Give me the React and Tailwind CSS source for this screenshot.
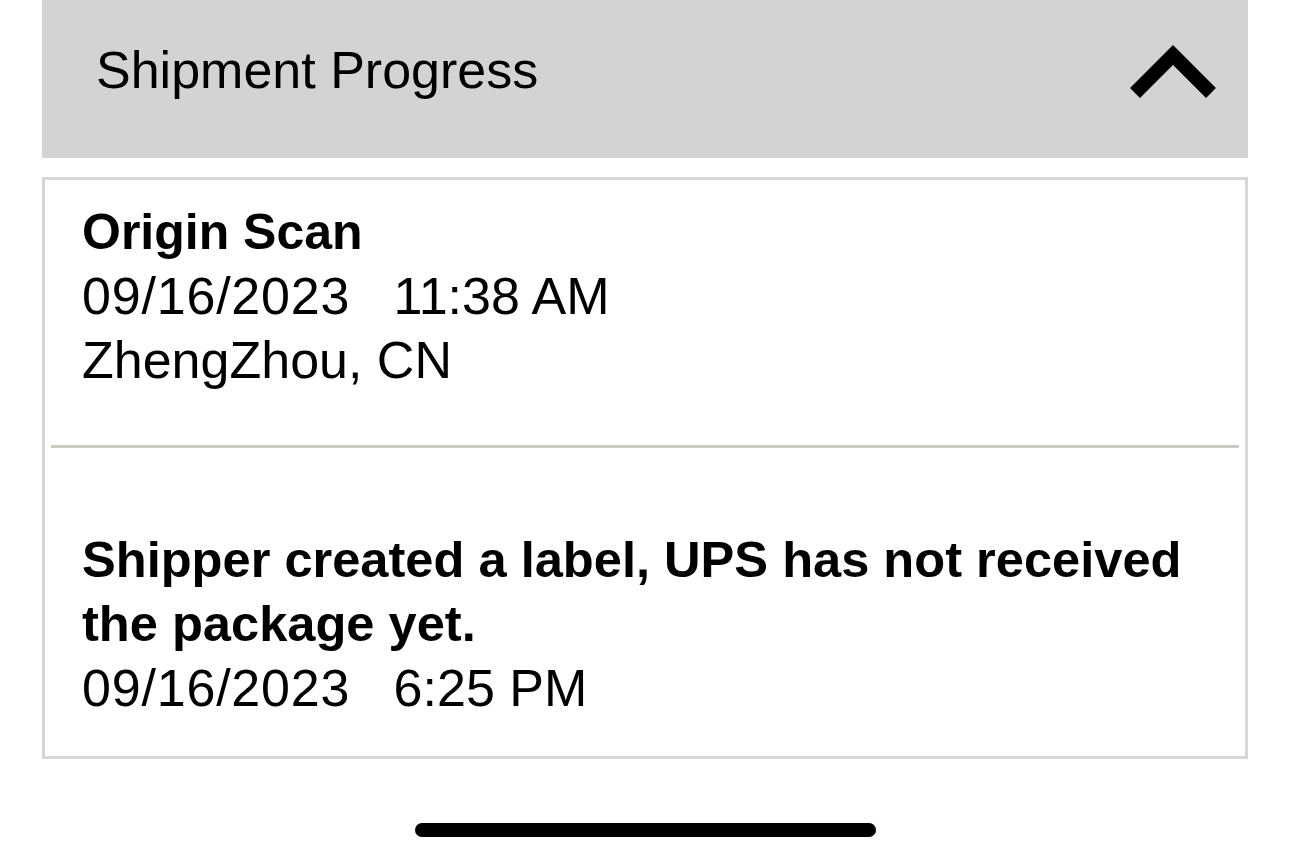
export default function App() {
  const font = { fontFamily: '"Liberation Sans", Arial, sans-serif' };
  return (
    <div className="min-h-[861px] w-full bg-white text-black" style={font}>
      <div className="mx-[42px] flex flex-col">
        <div className="flex h-[158px] items-start justify-between bg-[#d3d3d3] pl-[54px] pr-[27px]">
          <div className="mt-[41px] text-[52px] leading-[58px] font-normal">Shipment Progress</div>
          <svg className="mt-[40px]" width="96" height="64" viewBox="0 0 96 64" fill="none">
            <polyline points="10,53 48,15 86,53" stroke="#000" strokeWidth="14" strokeLinecap="butt" strokeLinejoin="miter" />
          </svg>
        </div>
        <div className="mt-[19px] flex flex-col border-[3px] border-[#d6d6d6] px-[6px] pt-[20px] pb-[36px]">
          <div className="pl-[31px] pr-[31px] leading-[64px]">
            <div className="text-[50px] font-bold">Origin Scan</div>
            <div className="text-[52px] whitespace-pre"><span className="tracking-[0.8px]">09/16/2023</span>   11:38 AM</div>
            <div className="text-[52px]">ZhengZhou, CN</div>
          </div>
          <div className="mt-[53px] h-[3px] bg-[#cdc9c1]"></div>
          <div className="mt-[80px] pl-[31px] pr-[31px] leading-[64px]">
            <div className="text-[50.6px] font-bold">Shipper created a label, UPS has not received the package yet.</div>
            <div className="text-[52px] whitespace-pre"><span className="tracking-[0.8px]">09/16/2023</span>   6:25 PM</div>
          </div>
        </div>
        <div className="mx-auto mt-[64px] h-[14px] w-[461px] rounded-full bg-black"></div>
      </div>
    </div>
  );
}
